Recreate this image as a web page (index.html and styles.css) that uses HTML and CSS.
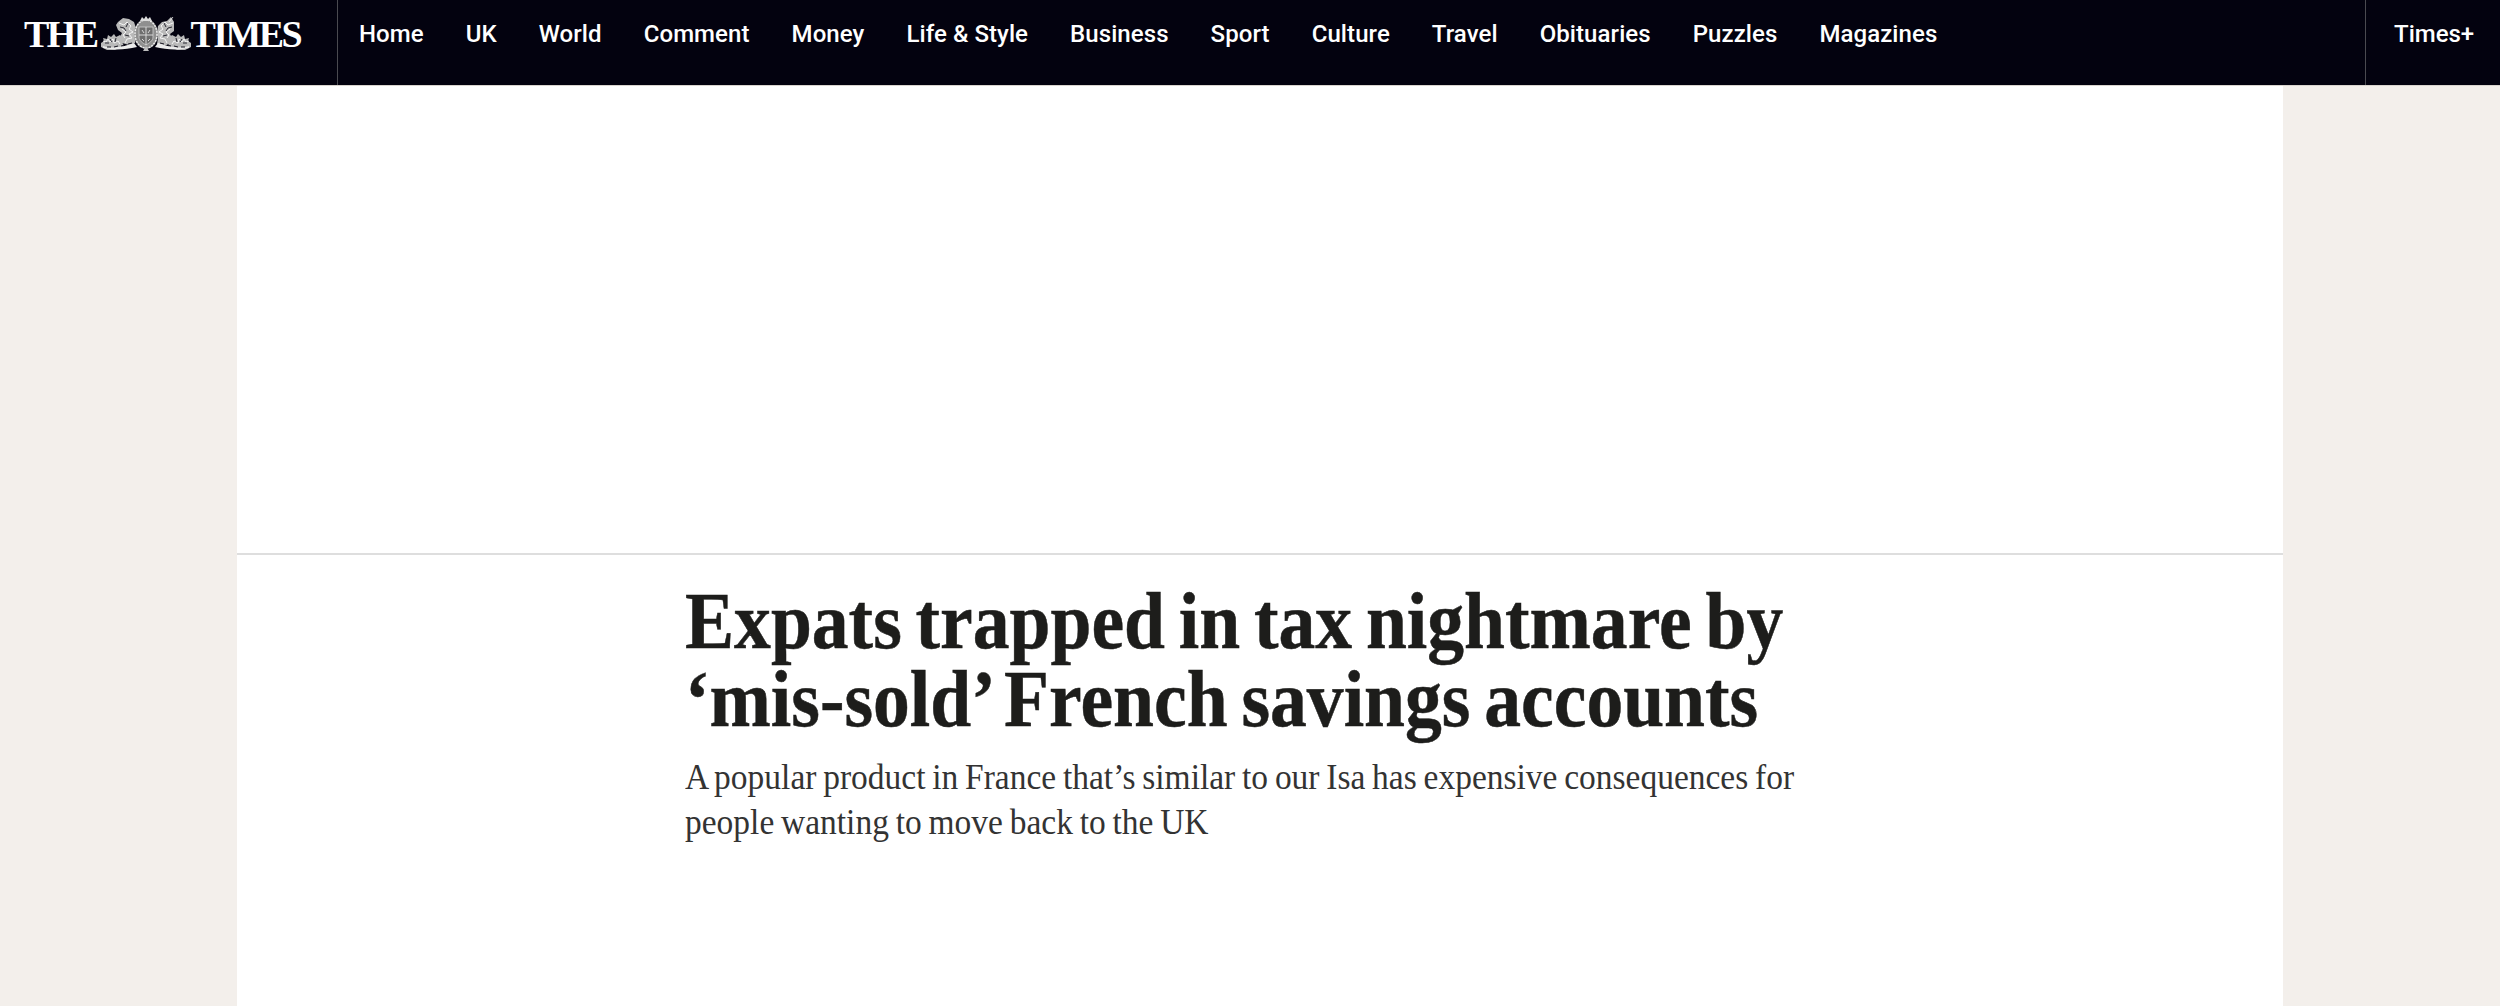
FILE: index.html
```html
<!DOCTYPE html>
<html lang="en">
<head>
<meta charset="utf-8">
<title>Expats trapped in tax nightmare by ‘mis-sold’ French savings accounts</title>
<link rel="stylesheet" href="styles.css">
</head>
<body>
<header class="masthead">
  <a class="logo" href="#">
    <span>THE</span>
    <svg class="crest" viewBox="0 0 90 36" width="90" height="36" aria-hidden="true">
      <g fill="#b9b9b9">
        <path d="M0 27l3-2-1-3 4 1 1-4 3 2 3-3 2 3 4-2 3 3-1 4 2 4-9 4-8 0-6-3z"/>
        <path d="M90 27l-3-2 1-3-4 1-1-4-3 2-3-3-2 3-4-2-3 3 1 4-2 4 9 4 8 0 6-3z"/>
        <path d="M17 6l5-4 6 1 5 3 2 6-1 5 1 5-1 5-6 2-7-2-2-6 2-4-4-3-2-5z"/>
        <path d="M73 6l-3-5-4 4-5 1-4 4-1 7 1 5-1 6 6 2 7-2 2-6-2-4 4-3z"/>
      </g>
      <g fill="none" stroke="#f4f4f4" stroke-width="1">
        <path d="M18 7l5 2 3-3 4 4-2 3 4 3-4 2 3 4-5 1-2 4M21 13l4 3-3 3 2 3M2 25l3 1 2-3 2 3 3-3 1 4 4-2 2 3"/>
        <path d="M72 7l-5 2-3-3-4 4 2 3-4 3 4 2-3 4 5 1 2 4M69 13l-4 3 3 3-2 3M88 25l-3 1-2-3-2 3-3-3-1 4-4-2-2 3"/>
        <path d="M68 6l4-5" stroke-width=".8"/>
      </g>
      <g stroke="#03020f" stroke-width=".8" fill="none">
        <path d="M19 11l4 1 2 3M24 19l4 1M27 7l-2 4M9 23l2 3M15 22l-1 4M4 27l4 0"/>
        <path d="M71 11l-4 1-2 3M66 19l-4 1M63 7l2 4M81 23l-2 3M75 22l1 4M86 27l-4 0"/>
      </g>
      <ellipse cx="45" cy="18" rx="12" ry="15" fill="#8f8f8f"/>
      <ellipse cx="45" cy="18" rx="11" ry="14" fill="none" stroke="#efefef" stroke-width="1.4" stroke-dasharray="2 1"/>
      <path d="M38 11h14v10c0 4-4 6-7 8-3-2-7-4-7-8z" fill="#6e6e6e" stroke="#cfcfcf" stroke-width=".8"/>
      <path d="M45 11v18M38 19h14M41 14l2 3M49 14l-2 3M41 23l2 2M49 23l-2 2" stroke="#e2e2e2" stroke-width=".9" fill="none"/>
      <path d="M39 5l2-4 2 2 2-3 2 3 2-2 2 4z" fill="#dcdcdc"/>
      <path d="M2 30c10 3 20 1 31-3l3 4c-12 3-24 3-34 1zM88 30c-10 3-20 1-31-3l-3 4c12 3 24 3 34 1z" fill="#ececec"/>
      <path d="M6 31l4 0M13 31l4-1M20 30l4-1M27 28l4-1M84 31l-4 0M77 31l-4-1M70 30l-4-1M63 28l-4-1" stroke="#03020f" stroke-width=".9"/>
      <path d="M45 30l3 5h-6z" fill="#bdbdbd"/>
    </svg>
    <span>TIMES</span>
  </a>
  <nav class="nav">
    <a href="#">Home</a>
    <a href="#">UK</a>
    <a href="#">World</a>
    <a href="#">Comment</a>
    <a href="#">Money</a>
    <a href="#">Life &amp; Style</a>
    <a href="#">Business</a>
    <a href="#">Sport</a>
    <a href="#">Culture</a>
    <a href="#">Travel</a>
    <a href="#">Obituaries</a>
    <a href="#">Puzzles</a>
    <a href="#">Magazines</a>
  </nav>
  <a class="plus" href="#">Times+</a>
</header>
<main class="page">
  <div class="ad-slot"></div>
  <article class="article">
    <h1 class="headline">Expats trapped in tax nightmare by<br>‘mis-sold’ French savings accounts</h1>
    <p class="standfirst">A popular product in France that’s similar to our Isa has expensive consequences for<br>people wanting to move back to the UK</p>
  </article>
</main>
</body>
</html>
```
FILE: styles.css
```css
* { box-sizing: border-box; }
html, body { margin: 0; height: 100%; }
body { background: #f3efeb; overflow: hidden; font-family: "Liberation Serif", serif; }
a { color: inherit; text-decoration: none; }

.masthead {
  display: flex;
  height: 86px;
  background: #03020f;
  color: #fff;
  border-bottom: 1px solid #d9d4ce;
}
.logo {
  display: flex;
  align-items: center;
  align-self: flex-start;
  width: 337px;
  height: 67px;
  padding-left: 24px;
  font: 700 38px/1 "Liberation Serif", serif;
  letter-spacing: -2.6px;
}
.crest { flex: none; margin: 0 -1px 0 5px; }
.nav {
  display: flex;
  flex: 1;
  gap: 42px;
  padding: 0 21px;
  border-left: 1px solid #4a4a50;
  font: 500 24px/68px Roboto, sans-serif;
  letter-spacing: .08px;
}
.plus {
  width: 135px;
  padding-left: 28px;
  border-left: 1px solid #4a4a50;
  font: 500 24px/68px Roboto, sans-serif;
}

.page {
  width: 2046px;
  height: 920px;
  margin-left: 237px;
  background: #fff;
}
.ad-slot {
  height: 469px;
  border-bottom: 2px solid #dedede;
}
.article { padding: 27px 0 0 448px; }
.headline {
  margin: 0;
  width: 1300px;
  font: 700 80px/78px "Liberation Serif", serif;
  color: #1d1d1b;
  word-spacing: -5px;
  -webkit-text-stroke: .5px #1d1d1b;
  transform: scaleX(.92);
  transform-origin: left top;
}
.standfirst {
  margin: 17px 0 0;
  width: 1300px;
  font: 400 36px/45px "Liberation Serif", serif;
  color: #333;
  word-spacing: -1.7px;
  transform: scaleX(.93);
  transform-origin: left top;
}
```
